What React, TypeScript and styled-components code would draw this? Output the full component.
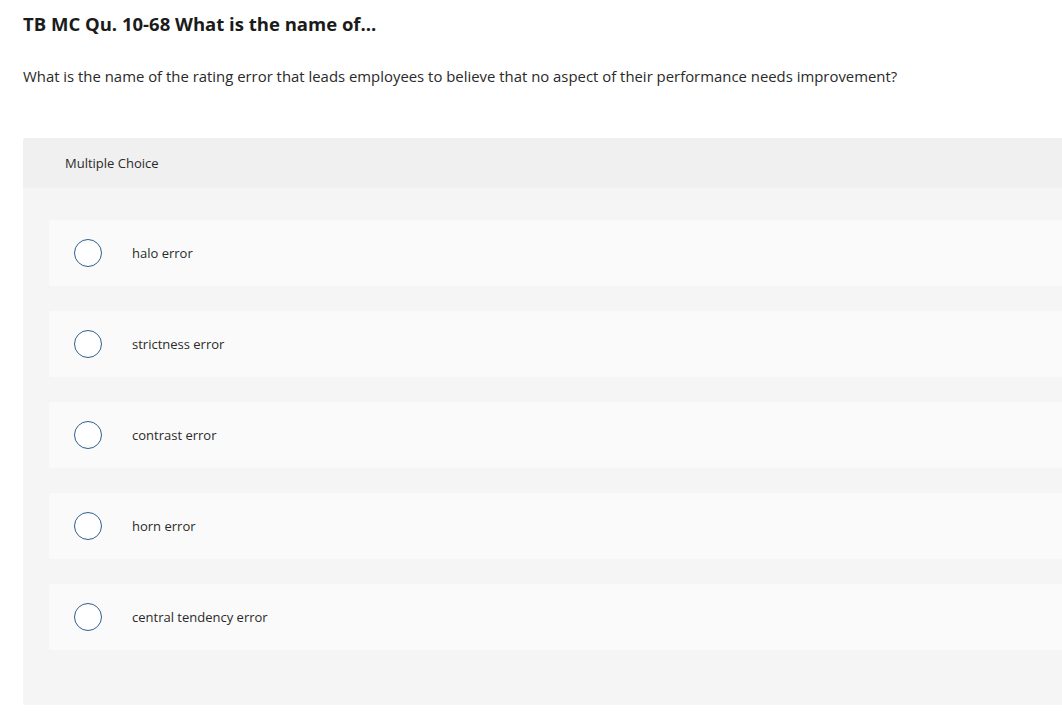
import React from 'react';
import styled, { createGlobalStyle } from 'styled-components';

const GlobalStyle = createGlobalStyle`
  html, body {
    margin: 0;
    padding: 0;
    background: #fff;
    overflow: hidden;
  }
  body {
    font-family: "Open Sans", Lato, Arial, sans-serif;
    color: #222;
  }
`;

const Page = styled.div`
  padding: 12px 0 0 23px;
`;

const Title = styled.h1`
  margin: 0;
  font-size: 18.5px;
  font-weight: 700;
  line-height: 24px;
  color: #1b1b1b;
`;

const Prompt = styled.p`
  margin: 30px 0 0;
  font-size: 14.9px;
  line-height: 20px;
  color: #2a2a2a;
`;

const Panel = styled.section`
  margin-top: 52px;
  width: 1060px;
  background: #f5f5f5;
  border-radius: 3px;
  overflow: hidden;
  padding-bottom: 55px;
`;

const PanelHeader = styled.div`
  height: 50px;
  background: #f0f0f0;
  display: flex;
  align-items: center;
  padding-left: 42px;
  font-size: 13px;
  color: #2a2a2a;
`;

const Options = styled.div`
  display: flex;
  flex-direction: column;
  gap: 25px;
  padding: 32px 0 0 26px;
`;

const Option = styled.label`
  display: flex;
  align-items: center;
  height: 66px;
  background: #fafafa;
  border-radius: 3px 0 0 3px;
  padding-left: 25px;
  cursor: pointer;
`;

const Radio = styled.span`
  width: 26px;
  height: 26px;
  border-radius: 50%;
  border: 1.5px solid #2f5d8c;
  background: #fff;
  flex-shrink: 0;
`;

const OptionText = styled.span`
  margin-left: 30px;
  font-size: 13px;
  color: #2a2a2a;
`;

const choices = ['halo error', 'strictness error', 'contrast error', 'horn error', 'central tendency error'];

export default function App() {
  return (
    <Page>
      <GlobalStyle />
      <Title>TB MC Qu. 10-68 What is the name of...</Title>
      <Prompt>
        What is the name of the rating error that leads employees to believe that no aspect of their performance needs improvement?
      </Prompt>
      <Panel>
        <PanelHeader>Multiple Choice</PanelHeader>
        <Options>
          {choices.map((c) => (
            <Option key={c}>
              <Radio />
              <OptionText>{c}</OptionText>
            </Option>
          ))}
        </Options>
      </Panel>
    </Page>
  );
}
